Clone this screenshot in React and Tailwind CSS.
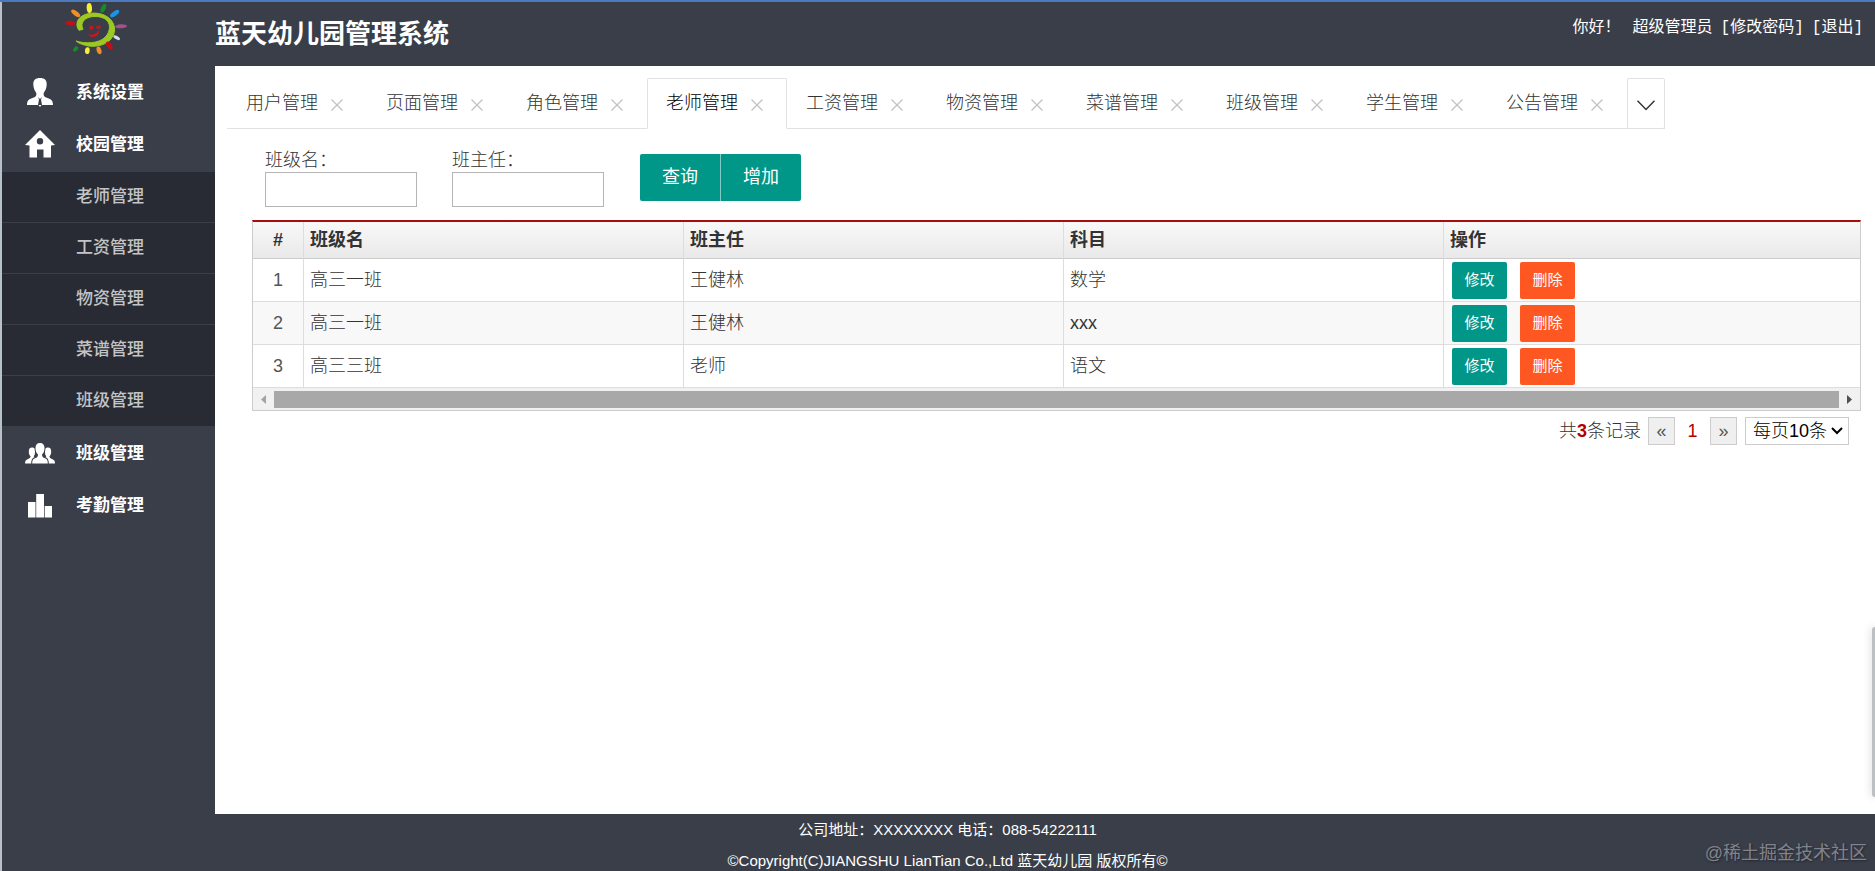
import { useState } from 'react'

const TABS = ['用户管理', '页面管理', '角色管理', '老师管理', '工资管理', '物资管理', '菜谱管理', '班级管理', '学生管理', '公告管理']

const SUB_MENU = ['老师管理', '工资管理', '物资管理', '菜谱管理', '班级管理']

const ROWS = [
  { id: 1, className: '高三一班', teacher: '王健林', subject: '数学' },
  { id: 2, className: '高三一班', teacher: '王健林', subject: 'xxx' },
  { id: 3, className: '高三三班', teacher: '老师', subject: '语文' }
]

function Logo() {
  return (
    <svg width="90" height="58" viewBox="0 6 270 174" className="block">
      <path d="M87 91 C78 80 78 62 92 51 C108 38 140 35 164 46 C190 58 200 84 190 106 C176 136 134 144 106 136 C94 133 86 129 78 123 C104 131 146 132 166 111 C182 94 184 68 164 56 C144 45 112 48 101 62 C95 70 94 78 99 88 Z" fill="#9bc922" stroke="#9bc922" strokeWidth="3" strokeLinejoin="round" />
      <ellipse cx="118" cy="24" rx="8" ry="15" fill="#f4ee38" transform="rotate(-4 118 24)" />
      <ellipse cx="160" cy="25" rx="7" ry="14" fill="#168b2c" transform="rotate(24 160 25)" />
      <ellipse cx="194" cy="41" rx="7" ry="16" fill="#1c93e8" transform="rotate(54 194 41)" />
      <ellipse cx="213" cy="79" rx="18" ry="6" fill="#a5508d" transform="rotate(-3 213 79)" />
      <ellipse cx="200" cy="113" rx="11" ry="5" fill="#d7daf2" transform="rotate(30 200 113)" />
      <ellipse cx="178" cy="137" rx="7" ry="14" fill="#c70d14" transform="rotate(-36 178 137)" />
      <ellipse cx="147" cy="151" rx="7" ry="12" fill="#f08e2a" transform="rotate(-16 147 151)" />
      <ellipse cx="112" cy="152" rx="7" ry="10" fill="#f4ee38" transform="rotate(6 112 152)" />
      <ellipse cx="77" cy="147" rx="6" ry="9" fill="#168b2c" transform="rotate(42 77 147)" />
      <ellipse cx="77" cy="40" rx="7" ry="16" fill="#f08e2a" transform="rotate(-52 77 40)" />
      <path d="M44 69 C54 58 70 61 78 70 C70 80 54 79 44 69 Z" fill="#c70d14" />
      <path d="M115 101 C124 107 136 105 148 91 C147 106 138 112 129 111 C120 110 116 107 115 101 Z" fill="#d0141b" />
      <circle cx="124" cy="83" r="6" fill="#d0141b" />
      <path d="M137 77 L144 80 L151 74 L152 85 L141 87 Z" fill="#d0141b" />
    </svg>
  )
}

function UserIcon() {
  return (
    <svg width="28" height="32" viewBox="0 0 28 32" fill="#fff">
      <path d="M14 1 C9.500 1 7.200 3 7.300 7.500 C7.400 11.500 9 14.500 10.800 16.600 C10.800 19 9.500 20 6.500 21 C3 22 1 23.500 1 28 H12 L13 22.500 L12 20 H16 L15 22.500 L16 28 H27 C27 23.500 25 22 21.500 21 C18.500 20 17.200 19 17.200 16.600 C19 14.500 20.600 11.500 20.700 7.500 C20.800 3 18.500 1 14 1 Z" />
      <path d="M10.500 15 H17.500 V19 L14 22 L10.500 19 Z" />
      <path d="M12.500 28 H15.500 L14 30 Z" />
    </svg>
  )
}

function HomeIcon() {
  return (
    <svg width="30" height="31" viewBox="0 0 30 31" fill="#fff">
      <path fillRule="evenodd" d="M15 0 L30 15 L26 15.500 V27.500 H18.500 V19.500 H12 V27.500 H4.500 V15.500 L0 15 Z M15 8 A3.200 3.200 0 1 0 15 14.400 A3.200 3.200 0 1 0 15 8 Z" />
    </svg>
  )
}

function GroupIcon() {
  return (
    <svg width="30" height="22" viewBox="0 0 30 22" fill="#fff">
      <path d="M15 0 C11.800 0 10.500 2 10.500 5 C10.500 8 11.500 10.500 13 11.500 C13 14 12 14.500 10 15.200 C7.800 16 7.200 17.500 7.200 20.500 H22.800 C22.800 17.500 22.200 16 20 15.200 C18 14.500 17 14 17 11.500 C18.500 10.500 19.500 8 19.500 5 C19.500 2 18.200 0 15 0 Z" />
      <path d="M7 4.500 C4.800 4.500 3.800 6 3.800 8.500 C3.800 11 4.600 12.500 5.500 13.300 C5.500 15 4.500 15.400 3 16 C1 16.700 0 18 0 20.500 H6.200 C6.200 17 7 15.200 9.500 14.300 L8.700 13.300 C9.600 12.500 10 11 10 9 L9.500 5.500 C9 4.800 8 4.500 7 4.500 Z" />
      <path d="M23 4.500 C25.200 4.500 26.200 6 26.200 8.500 C26.200 11 25.400 12.500 24.500 13.300 C24.500 15 25.500 15.400 27 16 C29 16.700 30 18 30 20.500 H23.800 C23.800 17 23 15.200 20.500 14.300 L21.300 13.300 C20.400 12.500 20 11 20 9 L20.500 5.500 C21 4.800 22 4.500 23 4.500 Z" />
    </svg>
  )
}

function ChartIcon() {
  return (
    <svg width="26" height="24" viewBox="0 0 26 24" fill="#fff">
      <path d="M1 8 H8.500 V23.500 H1 Z M9.200 0 H17 V23.500 H9.200 Z M17.700 12 H25 V23.500 H17.700 Z" />
    </svg>
  )
}

function MenuItem({ icon, label }) {
  return (
    <a href="#" className="flex items-center h-[52px] pl-5 text-[17px] font-bold text-white">
      <span className="w-9 mr-[18px] flex justify-center">{icon}</span>
      {label}
    </a>
  )
}

function Sidebar() {
  return (
    <nav className="w-[213px] shrink-0 pt-px">
      <MenuItem icon={<UserIcon />} label="系统设置" />
      <MenuItem icon={<HomeIcon />} label="校园管理" />
      <ul className="mb-0.5 bg-[#282b33]">
        {SUB_MENU.map((label) => (
          <li key={label} className="border-t border-[#3a3f4a]">
            <a href="#" className="flex items-center h-[50px] pl-[74px] text-[17px] font-medium text-[#c3c4c7]">{label}</a>
          </li>
        ))}
      </ul>
      <MenuItem icon={<GroupIcon />} label="班级管理" />
      <MenuItem icon={<ChartIcon />} label="考勤管理" />
    </nav>
  )
}

function Tabs({ active, onSelect }) {
  return (
    <div className="flex self-start h-[51px] ml-3 mt-3 border-b border-[#e2e2e2]">
      {TABS.map((name) => (
        <div
          key={name}
          className={`flex items-center w-[140px] h-[51px] pl-[18px] border rounded-t-xs ${
            name === active ? 'border-[#e2e2e2] border-b-white bg-white text-black' : 'border-transparent'
          }`}
        >
          <button type="button" onClick={() => onSelect(name)} className="whitespace-nowrap">{name}</button>
          <button type="button" aria-label="关闭" className="ml-[13px] mt-0.5">
            <svg width="12" height="12" viewBox="0 0 12 12" stroke="#c2c2c2" strokeWidth="1.300" fill="none">
              <path d="M0.500 0.500 L11.500 11.500 M11.500 0.500 L0.500 11.500" />
            </svg>
          </button>
        </div>
      ))}
      <button type="button" aria-label="更多" className="flex items-center justify-center w-[38px] h-[51px] pt-1 border border-[#e2e2e2] rounded-xs">
        <svg width="18" height="11" viewBox="0 0 18 11" stroke="#333" strokeWidth="1.500" fill="none">
          <path d="M0.500 0.800 L9 9.500 L17.500 0.800" />
        </svg>
      </button>
    </div>
  )
}

function SearchBar() {
  return (
    <form className="flex pl-[50px] pt-5 h-[91px]" onSubmit={(e) => e.preventDefault()}>
      <div className="w-[187px]">
        <label htmlFor="className" className="block leading-[23px]">班级名：</label>
        <input id="className" type="text" className="block w-[152px] h-[35px] px-1 border border-[#b5b5b5]" />
      </div>
      <div className="w-[188px]">
        <label htmlFor="teacher" className="block leading-[23px]">班主任：</label>
        <input id="teacher" type="text" className="block w-[152px] h-[35px] px-1 border border-[#b5b5b5]" />
      </div>
      <div className="flex mt-[5px] font-normal">
        <button type="submit" className="w-20 h-[47px] rounded-l-xs bg-[#009688] text-white">查询</button>
        <button type="button" className="w-[81px] h-[47px] rounded-r-xs border-l border-white/50 bg-[#009688] text-white">增加</button>
      </div>
    </form>
  )
}

function DataTable() {
  return (
    <div className="ml-[37px] mr-[14px] border border-t-2 border-[#ccc] border-t-[#a80c0c]">
      <table className="w-full table-fixed border-separate border-spacing-0">
        <colgroup>
          <col className="w-[51px]" />
          <col className="w-[380px]" />
          <col className="w-[380px]" />
          <col className="w-[380px]" />
          <col />
        </colgroup>
        <thead>
          <tr className="h-[37px] bg-linear-to-b from-[#f8f8f8] to-[#e9e9e9] text-left">
            <th className="border-r border-b border-[#ccc] border-r-[#ddd] text-center">#</th>
            <th className="pl-1.5 border-r border-b border-[#ccc] border-r-[#ddd]">班级名</th>
            <th className="pl-1.5 border-r border-b border-[#ccc] border-r-[#ddd]">班主任</th>
            <th className="pl-1.5 border-r border-b border-[#ccc] border-r-[#ddd]">科目</th>
            <th className="pl-1.5 border-b border-[#ccc]">操作</th>
          </tr>
        </thead>
        <tbody>
          {ROWS.map((row) => (
            <tr key={row.id} className="h-[43px] even:bg-[#f8f8f8]">
              <td className="border-r border-b border-[#ddd] text-center text-[#555]">{row.id}</td>
              <td className="pl-1.5 border-r border-b border-[#ddd]">{row.className}</td>
              <td className="pl-1.5 border-r border-b border-[#ddd]">{row.teacher}</td>
              <td className="pl-1.5 border-r border-b border-[#ddd]">{row.subject}</td>
              <td className="pl-2 border-b border-[#ddd]">
                <div className="flex gap-[13px] text-[15px] font-normal text-white">
                  <button type="button" className="w-[55px] h-[37px] rounded-xs bg-[#009688]">修改</button>
                  <button type="button" className="w-[55px] h-[37px] rounded-xs bg-[#ff5722]">删除</button>
                </div>
              </td>
            </tr>
          ))}
        </tbody>
      </table>
      {/* horizontal scrollbar */}
      <div className="flex items-center h-[22px] bg-[#f1f1f1]">
        <svg width="21" height="17" viewBox="0 0 21 17"><path d="M13 4 V13 L8 8.500 Z" fill="#a3a3a3" /></svg>
        <div className="grow h-[17px] bg-[#a8a8a8]" />
        <svg width="21" height="17" viewBox="0 0 21 17"><path d="M8 4 V13 L13 8.500 Z" fill="#505050" /></svg>
      </div>
    </div>
  )
}

function Pager() {
  return (
    <div className="flex items-center justify-end mt-1.5 mr-[26px]">
      <span className="mr-[7px]">共<b className="font-bold text-[#b60000]">3</b>条记录</span>
      <button type="button" className="w-[27px] h-7 border border-[#ccc] bg-[#efefef] text-[#555]">«</button>
      <span className="w-[35px] text-center text-[#b60000]">1</span>
      <button type="button" className="w-[27px] h-7 border border-[#ccc] bg-[#efefef] text-[#555]">»</button>
      <div className="relative ml-2">
        <select aria-label="每页条数" className="block appearance-none w-[104px] h-7 pl-[7px] border border-[#ccc] bg-white text-black leading-6">
          <option>每页10条</option>
          <option>每页20条</option>
        </select>
        <svg className="absolute right-1.5 top-2.5 pointer-events-none" width="12" height="8" viewBox="0 0 12 8" stroke="#000" strokeWidth="2" fill="none">
          <path d="M1 1 L6 6 L11 1" />
        </svg>
      </div>
    </div>
  )
}

function App() {
  const [active, setActive] = useState('老师管理')

  return (
    <div className="relative flex flex-col h-screen overflow-hidden border-t-2 border-[#4a7abb] bg-[#3a3e49] font-['Liberation_Sans','Noto_Sans_CJK_SC',sans-serif] text-[18px] text-[#333]">
      <div className="flex flex-col grow min-h-0 border-l-2 border-[#b8c0cc]">
        <header className="flex h-16 shrink-0 text-white">
          <div className="w-[213px] shrink-0 pl-12">
            <Logo />
          </div>
          <h1 className="grow pt-2.5 text-[26px] leading-[44px] font-bold">蓝天幼儿园管理系统</h1>
          <div className="flex gap-2 pt-3.5 pr-3 font-['Liberation_Mono','Noto_Sans_CJK_SC',monospace] text-[16px] leading-6">
            <span className="mr-1">你好！</span>
            <span>超级管理员</span>
            <a href="#">[修改密码]</a>
            <a href="#">[退出]</a>
          </div>
        </header>

        <div className="flex grow min-h-0">
          <Sidebar />
          <main className="flex flex-col grow min-w-0 bg-white font-light">
            <Tabs active={active} onSelect={setActive} />
            <SearchBar />
            <DataTable />
            <Pager />
          </main>
        </div>

        <footer className="h-[57px] shrink-0 pl-[18px] text-center text-[15px] leading-[31px] text-white">
          <p>公司地址：XXXXXXXX 电话：088-54222111</p>
          <p>©Copyright(C)JIANGSHU LianTian Co.,Ltd 蓝天幼儿园 版权所有©</p>
        </footer>
      </div>

      {/* floating panel peeking in from the right edge */}
      <div className="absolute right-0 bottom-[74px] w-[3px] h-[170px] rounded-l-sm bg-[#bcc0c3] shadow-[0_0_8px_rgba(0,0,0,0.25)]" />
      <div className="absolute right-2 bottom-1 leading-7 text-[#81838c] [text-shadow:1px_1px_2px_#22252d]">@稀土掘金技术社区</div>
    </div>
  )
}

export default App
